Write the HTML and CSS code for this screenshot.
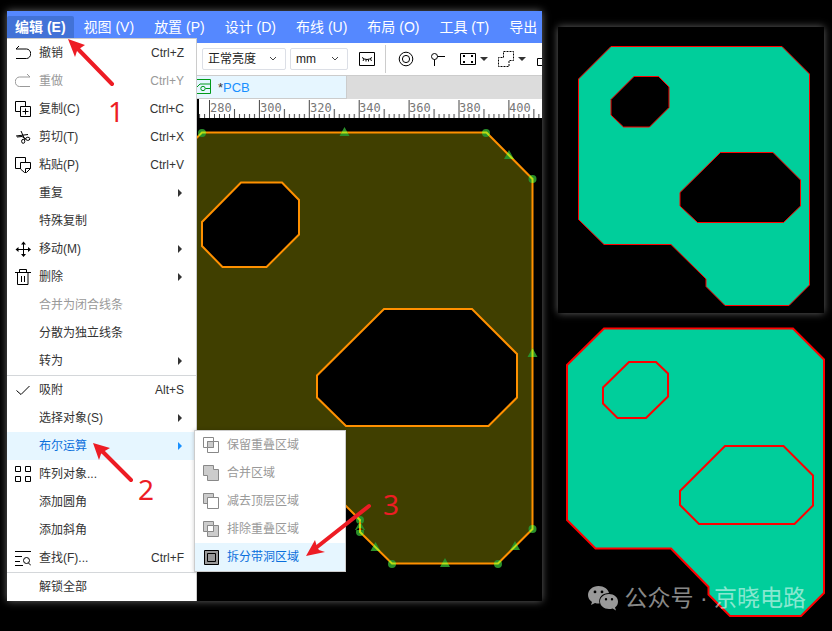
FILE: index.html
```html
<!DOCTYPE html>
<html lang="zh-CN">
<head>
<meta charset="utf-8">
<meta name="viewport" content="width=device-width, initial-scale=1">
<title>PCB 拆分带洞区域</title>
<link rel="stylesheet" href="styles.css">
</head>
<body>
<main class="page">
  <section class="app">
    <nav class="menubar">
      <button class="menubar-item is-open" type="button">编辑 (E)</button>
      <button class="menubar-item" type="button">视图 (V)</button>
      <button class="menubar-item" type="button">放置 (P)</button>
      <button class="menubar-item" type="button">设计 (D)</button>
      <button class="menubar-item" type="button">布线 (U)</button>
      <button class="menubar-item" type="button">布局 (O)</button>
      <button class="menubar-item" type="button">工具 (T)</button>
      <button class="menubar-item" type="button">导出</button>
    </nav>

    <div class="toolbar">
      <select class="picker picker-wide" aria-label="亮度"><option>正常亮度</option></select>
      <select class="picker" aria-label="单位"><option>mm</option></select>
      <button class="tool tool-eye" type="button" aria-label="隐藏">
        <svg class="icon" viewBox="0 0 16 16"><path class="line" d="M.5 1.500h15v13h-15z"/><path class="line" d="M3 6.500q5 4 10 0M5 8l-1 2M7 8.500v2M9.500 8.500v2M11.500 8l1 2"/></svg>
      </button>
      <span class="divider"></span>
      <div class="tools">
        <button class="tool" type="button" aria-label="过孔"><svg class="icon" viewBox="0 0 16 16"><circle class="line" cx="8" cy="8" r="6.800"/><circle class="line" cx="8" cy="8" r="3.600"/></svg></button>
        <button class="tool" type="button" aria-label="焊盘"><svg class="icon" viewBox="0 0 16 16"><circle class="line" cx="4.500" cy="5.500" r="3"/><path class="line" d="M7.500 5.500H15M4.500 8.500V15"/></svg></button>
        <button class="tool tool-drop" type="button" aria-label="板框">
          <svg class="icon" viewBox="0 0 16 16"><path class="line" d="M.5 2.500h15v11h-15z"/><path d="M3 4h2v2H3zM11 4h2v2h-2zM3 10h2v2H3zM11 10h2v2h-2z"/></svg>
          <svg class="caret" viewBox="0 0 8 4"><path d="M0 0h8L4 4z"/></svg>
        </button>
        <button class="tool tool-drop" type="button" aria-label="区域">
          <svg class="icon" viewBox="0 0 16 16"><path class="line dash" d="M5.500 .5h10v9h-4.500v6H.5v-9h5z"/></svg>
          <svg class="caret" viewBox="0 0 8 4"><path d="M0 0h8L4 4z"/></svg>
        </button>
        <button class="tool tool-drop" type="button" aria-label="挖槽"><svg class="icon" viewBox="0 0 16 16"><path class="line" d="M1.500 7.500h14v7h-14z"/></svg></button>
      </div>
    </div>

    <div class="tabs">
      <a class="tab" href="#pcb">
        <svg class="icon tab-icon" viewBox="0 0 16 16"><path class="line" d="M0 .5h15.500v14H0M1 9l4-4h10M10.500 9.500H15"/><circle class="line" cx="8" cy="9.500" r="2.200"/></svg>
        <span><span class="dirty">*</span>PCB</span>
      </a>
    </div>

    <svg class="ruler" viewBox="7 99 535 19">
      <defs>
        <pattern id="ticks" x="209" y="99" width="49.900" height="19" patternUnits="userSpaceOnUse">
          <path class="tick" d="M.5 1v18M5.500 15v4M10.500 15v4M15.500 15v4M20.500 15v4M25.500 10v9M30.500 15v4M35.500 15v4M40.500 15v4M45.500 15v4"/>
        </pattern>
      </defs>
      <path class="ruler-bg" d="M199 99h343v19H199z"/>
      <path fill="url(#ticks)" d="M199 99h343v19H199z"/>
      <g class="ruler-text">
        <text x="210" y="112">280</text><text x="260" y="112">300</text><text x="310" y="112">320</text>
        <text x="359" y="112">340</text><text x="409" y="112">360</text><text x="459" y="112">380</text><text x="509" y="112">400</text>
      </g>
    </svg>

    <svg class="board" id="pcb" viewBox="7 118 535 483">
      <defs>
        <path id="handles" d="M198 133a4 4 0 1 0 8 0a4 4 0 1 0-8 0M482 133a4 4 0 1 0 8 0a4 4 0 1 0-8 0M528.500 179a4 4 0 1 0 8 0a4 4 0 1 0-8 0M528.500 529a4 4 0 1 0 8 0a4 4 0 1 0-8 0M494 564a4 4 0 1 0 8 0a4 4 0 1 0-8 0M388 564a4 4 0 1 0 8 0a4 4 0 1 0-8 0M356 532a4 4 0 1 0 8 0a4 4 0 1 0-8 0M356 520a4 4 0 1 0 8 0a4 4 0 1 0-8 0M344.500 127l5 9h-10zM509 150l5 9h-10zM532.500 348l5 9h-10zM515 541l5 9h-10zM445 558l5 9h-10zM375.500 542l5 9h-10zM360 521l5 9h-10z"/>
        <path id="outline" d="M150 184.500L202 132.500H486.500L532.500 179V529L498 563.500H392L360 532V520L300 460H150z"/>
        <clipPath id="handle-clip"><use href="#handles"/></clipPath>
      </defs>
      <use class="copper" href="#outline"/>
      <path class="cutout" d="M241 182.500H282L299 200V234.500L266.500 267H222.500L202 246V222z"/>
      <path class="cutout" d="M384 309H472L517 354V397.500L488.500 426H346L317 397.500V375.500z"/>
      <use class="handle" href="#handles"/>
      <use class="outline-selected" href="#outline" clip-path="url(#handle-clip)"/>
    </svg>

    <ul class="menu">
      <li><button class="item" type="button"><svg class="icon" viewBox="0 0 16 16"><path class="line" d="M4 1L1 4h10.500a4 4.500 0 0 1 0 9.500H1"/></svg><span>撤销</span><kbd>Ctrl+Z</kbd></button></li>
      <li><button class="item" type="button" disabled><svg class="icon" viewBox="0 0 16 16"><path class="line" d="M12 1l3 3H4.500a4 4.500 0 0 0 0 9.500H15"/></svg><span>重做</span><kbd>Ctrl+Y</kbd></button></li>
      <li><button class="item" type="button"><svg class="icon" viewBox="0 0 16 16"><path class="line" d="M5 10.500H.5V.5h10V5M5.500 5.500h10v10h-10zM10.500 7.500v6M7.500 10.500h6"/></svg><span>复制(C)</span><kbd>Ctrl+C</kbd></button></li>
      <li><button class="item" type="button"><svg class="icon" viewBox="0 0 16 16"><path class="line" d="M1 7l12-1.500M6 2l4 9M2 8l5-.5 4 2.500"/><ellipse class="line" cx="12.800" cy="9.800" rx="2" ry="1.600"/><ellipse class="line" cx="8.200" cy="12.300" rx="1.600" ry="2"/></svg><span>剪切(T)</span><kbd>Ctrl+X</kbd></button></li>
      <li><button class="item" type="button"><svg class="icon" viewBox="0 0 16 16"><path class="line" d="M5 11.500H.5V.5h10V5M5.500 5.500h10v6l-4 4h-2l-4-3.500zM15.500 11.500h-5v4"/></svg><span>粘贴(P)</span><kbd>Ctrl+V</kbd></button></li>
      <li><button class="item has-sub" type="button"><span>重复</span></button></li>
      <li><button class="item" type="button"><span>特殊复制</span></button></li>
      <li><button class="item has-sub" type="button"><svg class="icon" viewBox="0 0 16 16"><path class="line" d="M8.500 2v13M2 8.500h13"/><path d="M8.500 .5l2.500 3H6zM8.500 16l2.500-3H6zM.5 8.500l3-2.500v5zM16 8.500L13 6v5z"/></svg><span>移动(M)</span></button></li>
      <li><button class="item has-sub" type="button"><svg class="icon" viewBox="0 0 16 16"><path class="line" d="M0 3.500h16M4.500 3V.5h7V3M2.500 3.500v12h10.500v-12M6.500 7v6M9.500 7v6"/></svg><span>删除</span></button></li>
      <li><button class="item" type="button" disabled><span>合并为闭合线条</span></button></li>
      <li><button class="item" type="button"><span>分散为独立线条</span></button></li>
      <li><button class="item has-sub" type="button"><span>转为</span></button></li>
      <li class="split"><button class="item" type="button"><svg class="icon" viewBox="0 0 16 16"><path class="line" d="M1.500 8.500l4.500 4 8.500-8.500"/></svg><span>吸附</span><kbd>Alt+S</kbd></button></li>
      <li><button class="item has-sub" type="button"><span>选择对象(S)</span></button></li>
      <li class="parent">
        <button class="item has-sub is-active" type="button"><span>布尔运算</span></button>
        <ul class="submenu">
          <li><button class="item" type="button" disabled><svg class="icon shape" viewBox="0 0 16 16"><path d="M.5 .5h10v10H.5zM4.500 4.500h11v11h-11z"/><path class="solid" d="M4.500 4.500h6v6h-6z"/></svg><span>保留重叠区域</span></button></li>
          <li><button class="item" type="button" disabled><svg class="icon shape" viewBox="0 0 16 16"><path class="solid" d="M.5 .5h10v4h5v11h-11v-5h-4z"/></svg><span>合并区域</span></button></li>
          <li><button class="item" type="button" disabled><svg class="icon shape" viewBox="0 0 16 16"><path class="solid" d="M.5 .5h10v10H.5z"/><path class="blank" d="M4.500 4.500h11v11h-11z"/></svg><span>减去顶层区域</span></button></li>
          <li><button class="item" type="button" disabled><svg class="icon shape" viewBox="0 0 16 16"><path class="solid" d="M.5 .5h10v10H.5zM4.500 4.500h11v11h-11z"/><path class="blank" d="M4.500 4.500h6v6h-6z"/></svg><span>排除重叠区域</span></button></li>
          <li><button class="item is-active" type="button"><svg class="icon ring" viewBox="0 0 16 16"><path d="M1.500 1.500h14v14h-14zM4.500 4.500h8v8h-8z"/></svg><span>拆分带洞区域</span></button></li>
        </ul>
      </li>
      <li><button class="item" type="button"><svg class="icon" viewBox="0 0 16 16"><path class="line" d="M.5 .5h5v5h-5zM10.500 .5h5v5h-5zM.5 10.500h5v5h-5zM10.500 10.500h5v5h-5z"/></svg><span>阵列对象...</span></button></li>
      <li><button class="item" type="button"><span>添加圆角</span></button></li>
      <li><button class="item" type="button"><span>添加斜角</span></button></li>
      <li><button class="item" type="button"><svg class="icon" viewBox="0 0 16 16"><path class="line" d="M0 1.500h16M0 6.500h7M0 11.500h5M0 15.500h8M13.500 13l2.500 2.500"/><circle class="line" cx="11.500" cy="10.500" r="3"/></svg><span>查找(F)...</span><kbd>Ctrl+F</kbd></button></li>
      <li class="split"><button class="item" type="button"><span>解锁全部</span></button></li>
    </ul>

    <svg class="notes" viewBox="7 11 535 590">
      <path class="shaft" d="M77 48L112 84M101 450L131 480M317 547L369 506"/>
      <path d="M68 39l17 6-6 4-2 2-2 6zM93 443l17 5-7 4-2 2-2 6zM306 556l9-16 2 7 2 3 6 2z"/>
      <text x="108" y="122">1</text>
      <text x="138" y="500">2</text>
      <text x="383" y="515">3</text>
    </svg>
  </section>

  <aside class="results">
    <svg class="result framed" viewBox="558 27 266 286">
      <path class="region" d="M611 46.500H782L809.500 74V285L789 305.500H725L706 286.500V279L671 244.500H604L578.500 219.500V79z"/>
      <path class="hole" d="M634 76.500H658.500L669 87V107.500L649.500 127H623.500L611 115V99.500z"/>
      <path class="hole" d="M720.500 152.500H773L800.500 180V206L783.500 222.500H697.500L680 206V192.500z"/>
    </svg>
    <div class="flat">
      <svg class="result" viewBox="558 327 266 290">
        <path class="region thick" d="M604 328.500H793L824 359.500V593L801 616H730L708.500 594.500V587L671 548.500H595.500L567 520V365z"/>
        <path class="trace" d="M629 362H656L668 373.500V396.500L646 418H617.500L603 403.500V387.500z"/>
        <path class="trace" d="M725 446H783.500L813 475.500V505.500L794.500 524H699L680 505V491z"/>
      </svg>
      <p class="watermark">
        <svg class="wechat" viewBox="0 0 30 25"><path fill-rule="evenodd" d="M10.500 0C4.500 0 0 4 0 9c0 3 1.500 5.300 4 7l-1 3 4-2q2 .7 4.500.6C10 11 15 7 21 7 20 3 16 0 10.500 0zM7 4.500a1.400 1.400 0 1 1 0 2.800a1.400 1.400 0 1 1 0-2.800zM14 4.500a1.400 1.400 0 1 1 0 2.800a1.400 1.400 0 1 1 0-2.800z"/><path fill-rule="evenodd" d="M21 8c-5 0-9 3.300-9 7.500S16 23 21 23q2 0 3.600-.6L28 24.500l-1-3c2-1.500 3-3.500 3-6C30 11.300 26 8 21 8zM18 12a1.200 1.200 0 1 1 0 2.400a1.200 1.200 0 1 1 0-2.400zM24 12a1.200 1.200 0 1 1 0 2.400a1.200 1.200 0 1 1 0-2.400z"/></svg>
        <span>公众号 · 京晓电路</span>
      </p>
    </div>
  </aside>
</main>
</body>
</html>
```

FILE: styles.css
```css
* {
  box-sizing: border-box;
}

body {
  margin: 0;
  background: #000;
  font-family: "Liberation Sans", "Noto Sans CJK SC", sans-serif;
  font-size: 12px;
  color: #333;
}

button,
select {
  font: inherit;
  color: inherit;
  border: 0;
  background: none;
  padding: 0;
  margin: 0;
}

ul {
  list-style: none;
  margin: 0;
  padding: 0;
}

svg {
  display: block;
}

.page {
  display: grid;
  grid-template-columns: minmax(0, 535fr) minmax(0, 266fr);
  gap: 16px;
  align-items: start;
  padding: 11px 8px 0 7px;
}

.app {
  position: relative;
  background: #000;
  box-shadow: 0 0 8px #666;
}

/* Menu bar */

.menubar {
  display: flex;
  height: 32px;
  padding-top: 5px;
  background: #5588ff;
  overflow: hidden;
}

.menubar-item {
  flex: none;
  height: 22px;
  padding: 0 10px;
  border-radius: 2px 2px 0 0;
  color: #fff;
  font-size: 14px;
  line-height: 22px;
  white-space: nowrap;
}

.menubar-item.is-open {
  padding: 0 8px;
  background: #4272d7;
  font-weight: bold;
}

/* Toolbar */

.toolbar {
  display: flex;
  align-items: center;
  gap: 4px;
  height: 33px;
  padding-left: 195px;
  border-bottom: 1px solid #ccc;
  background: #fff;
  overflow: hidden;
}

.picker {
  flex: none;
  appearance: none;
  width: 58px;
  height: 22px;
  padding: 0 5px;
  border: 1px solid #dcdfe6;
  border-radius: 2px;
  background: #fff url("data:image/svg+xml,%3Csvg xmlns='http://www.w3.org/2000/svg' width='8' height='6'%3E%3Cpath d='M1 1l3 3 3-3' fill='none' stroke='%23444'/%3E%3C/svg%3E") right 8px center no-repeat;
  color: #222;
  font-size: 12px;
}

.picker-wide {
  width: 84px;
}

.tools {
  display: flex;
}

.tool {
  display: flex;
  flex: none;
  align-items: center;
  justify-content: center;
  width: 32px;
  height: 28px;
}

.tool-eye {
  width: 29px;
}

.tool-drop {
  justify-content: flex-start;
  gap: 4px;
  width: 38px;
  padding-left: 6px;
}

.divider {
  flex: none;
  width: 1px;
  height: 28px;
  background: #ccc;
}

.icon {
  flex: none;
  width: 16px;
  height: 16px;
  fill: #000;
}

.line {
  fill: none;
  stroke: #000;
}

.dash {
  stroke-dasharray: 2 1;
}

.caret {
  width: 8px;
  height: 4px;
  fill: #333;
}

/* Document tabs */

.tabs {
  display: flex;
  height: 23px;
  background: #dcdcdc;
}

.tab {
  display: flex;
  align-items: center;
  gap: 7px;
  width: 340px;
  padding-left: 188px;
  border-right: 1px solid #ccc;
  border-bottom: 1px solid #ccc;
  background: #e6f6ff;
  color: #1890ff;
  font-size: 13px;
  text-decoration: none;
}

.tab-icon .line {
  stroke: #009a1a;
}

.dirty {
  color: #333;
}

/* Ruler and board */

.ruler,
.board {
  width: 100%;
}

.ruler-bg {
  fill: #fff;
}

.tick {
  stroke: #444;
}

.ruler-text {
  fill: #777;
  font-family: "DejaVu Sans Mono", monospace;
  font-size: 12px;
}

.copper {
  fill: #403f00;
  stroke: #ff9000;
  stroke-width: 2;
}

.cutout {
  fill: #000;
  stroke: #ff9000;
  stroke-width: 2;
}

.handle {
  fill: #2a902a;
}

.outline-selected {
  fill: none;
  stroke: #bcdc14;
  stroke-width: 2;
}

/* Drop-down menu */

.menu {
  position: absolute;
  top: 27px;
  left: 0;
  width: 190px;
  border-top: 1px solid #ccc;
  border-right: 1px solid #ccc;
  background: #fff;
}

.split {
  border-top: 1px solid #d4d7da;
}

.parent {
  position: relative;
}

.item {
  display: flex;
  align-items: center;
  gap: 8px;
  width: 100%;
  height: 28px;
  padding: 0 12px 0 8px;
  line-height: 16px;
  text-align: left;
  white-space: nowrap;
}

.item > span:first-child {
  margin-left: 24px;
}

.item kbd {
  margin-left: auto;
  font: inherit;
}

.item:disabled {
  color: #999;
}

.item:disabled .line {
  stroke: #999;
}

.has-sub::after {
  content: "";
  margin-left: auto;
  margin-right: 2px;
  border: 4px solid transparent;
  border-right: 0;
  border-left-color: #333;
}

.item.is-active {
  background: #e6f6ff;
  color: #0a6fdc;
}

.is-active::after {
  border-left-color: #1890ff;
}

.submenu {
  position: absolute;
  top: -2px;
  left: 187px;
  width: 152px;
  border: 1px solid #ccc;
  background: #fff;
  box-shadow: 0 0 4px rgba(0, 0, 0, 0.2);
}

.shape {
  fill: none;
  stroke: #888;
}

.solid {
  fill: #ccc;
}

.blank {
  fill: #fff;
}

.ring {
  fill: #999;
  stroke: #000;
}

/* Numbered arrows over the window */

.notes {
  position: absolute;
  inset: 0;
  width: 100%;
  fill: #ed1c24;
  pointer-events: none;
  font-family: "Noto Sans", sans-serif;
  font-size: 28px;
}

.shaft {
  fill: none;
  stroke: #ed1c24;
  stroke-width: 4;
  stroke-linecap: round;
}

/* Result drawings */

.results {
  display: grid;
  gap: 14px;
  padding-top: 16px;
}

.result {
  width: 100%;
  overflow: visible;
}

.framed {
  background: #000;
  box-shadow: 0 0 8px #666;
}

.region {
  fill: #00ce9b;
  stroke: #f00;
}

.hole {
  fill: #000;
  stroke: #f00;
}

.thick,
.trace {
  stroke-width: 2;
}

.trace {
  fill: none;
  stroke: #f00;
}

.flat {
  position: relative;
}

.watermark {
  position: absolute;
  right: 18px;
  bottom: 3px;
  display: flex;
  align-items: center;
  gap: 7px;
  margin: 0;
  color: rgba(255, 255, 255, 0.55);
  font-size: 23px;
  line-height: 32px;
  white-space: nowrap;
}

.wechat {
  width: 30px;
  height: 25px;
  fill: #999;
}
```
